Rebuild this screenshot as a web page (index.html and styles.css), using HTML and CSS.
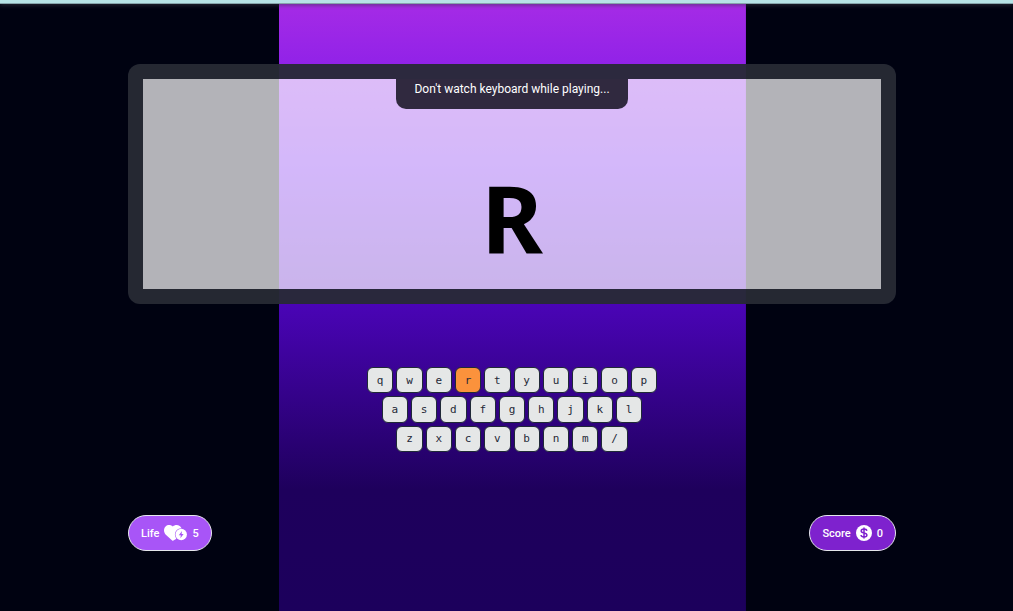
FILE: index.html
```html
<!DOCTYPE html>
<html lang="en">
<head>
<meta charset="utf-8">
<meta name="viewport" content="width=device-width, initial-scale=1">
<title>Typing game</title>
<link rel="stylesheet" href="styles.css">
</head>
<body>
<div class="topbar"></div>
<div class="stage">
<main class="game">
  <section class="screen">
    <p class="notice">Don't watch keyboard while playing...</p>
    <h1 class="letter">R</h1>
  </section>
  <section class="keyboard" aria-label="Keyboard">
    <div class="row"><kbd class="key">q</kbd><kbd class="key">w</kbd><kbd class="key">e</kbd><kbd class="key active">r</kbd><kbd class="key">t</kbd><kbd class="key">y</kbd><kbd class="key">u</kbd><kbd class="key">i</kbd><kbd class="key">o</kbd><kbd class="key">p</kbd></div>
    <div class="row"><kbd class="key">a</kbd><kbd class="key">s</kbd><kbd class="key">d</kbd><kbd class="key">f</kbd><kbd class="key">g</kbd><kbd class="key">h</kbd><kbd class="key">j</kbd><kbd class="key">k</kbd><kbd class="key">l</kbd></div>
    <div class="row"><kbd class="key">z</kbd><kbd class="key">x</kbd><kbd class="key">c</kbd><kbd class="key">v</kbd><kbd class="key">b</kbd><kbd class="key">n</kbd><kbd class="key">m</kbd><kbd class="key">/</kbd></div>
  </section>
  <footer class="stats">
    <div class="pill life">
      <span>Life</span>
      <svg class="heart" viewBox="0 0 23 18" aria-hidden="true"><path fill="#fff" d="M8.8 2.6C10.6 .8 13.6 .6 15.6 2C17.4 3.3 18 5.2 17.6 7L12 15L9.4 16.6Q8.8 17 8.2 16.6L1.8 10.8C-.5 8.4-.6 4.6 1.6 2.4C3.7 .5 7 .7 8.8 2.6Z"/><circle cx="17.2" cy="10.5" r="6.3" fill="#a855f7"/><circle cx="17.2" cy="10.5" r="5.7" fill="#fff"/><path fill="#a855f7" d="M18 7L14.8 11.2H16.8L16.4 14.2L19.6 10H17.6Z"/></svg>
      <span>5</span>
    </div>
    <div class="pill score">
      <span>Score</span>
      <svg class="coin" viewBox="0 0 16 16" aria-hidden="true"><circle cx="8" cy="8" r="8" fill="#fff"/><path d="M8 2.6V13.4M10.8 5.8C10.6 4.6 9.5 4 8 4C6.3 4 5.2 4.7 5.2 5.9C5.2 8.7 10.9 7.1 10.9 10C10.9 11.3 9.7 12 8 12C6.3 12 5.2 11.2 5 10" fill="none" stroke="#7e22ce" stroke-width="1.5"/></svg>
      <span>0</span>
    </div>
  </footer>
</main>
</div>
</body>
</html>
```
FILE: styles.css
```css
* { box-sizing: border-box; }

body {
  margin: 0;
  min-height: 100vh;
  display: flex;
  flex-direction: column;
  font-family: Roboto, "Noto Sans", sans-serif;
  color: #fff;
  background: #000211;
}

.topbar {
  position: relative;
  height: 4px;
  background: #b7e3e6;
  border-bottom: 1px solid #86a4ab;
  box-shadow: 0 1px 4px rgba(60, 60, 70, .7);
}

.stage {
  flex: 1;
  display: flex;
  padding-left: 11px;
  background-image: linear-gradient(180deg, #a52be6 0, #8c20e8 76px, #6c10ee 166px, #4a04b6 300px, #1e005c 486px, #1c005c 100%);
  background-origin: content-box;
  background-size: 46.6% 100%;
  background-position: center top;
  background-repeat: no-repeat;
}

.game {
  width: 100%;
  max-width: 768px;
  margin: 0 auto;
  padding: 60px 0;
  display: flex;
  flex-direction: column;
  align-items: center;
}

.screen {
  width: 100%;
  height: 240px;
  display: flex;
  flex-direction: column;
  align-items: center;
  border: 15px solid rgba(39, 42, 53, .95);
  border-radius: 12px;
  background: rgba(255, 255, 255, .7);
  background-clip: padding-box;
}

.notice {
  margin: 0;
  padding: 0 18px 10px;
  font-size: 12px;
  line-height: 20px;
  background: #30293f;
  border-radius: 0 0 10px 10px;
}

.letter {
  margin: 61px 0 0;
  font-family: "Noto Sans", sans-serif;
  font-size: 94px;
  line-height: 96px;
  font-weight: 700;
  color: #000;
}

.keyboard {
  width: 290px;
  height: 85px;
  margin-top: 63px;
  display: grid;
  grid-template-rows: repeat(3, 1fr);
  gap: 3px;
}

.row {
  display: flex;
  justify-content: center;
  gap: 3px;
}

.key {
  flex: 0 0 calc((100% - 27px) / 10);
  display: flex;
  align-items: center;
  justify-content: center;
  font: 11px "DejaVu Sans Mono", monospace;
  color: #1f2937;
  background: #e5e7e7;
  border: 1px solid #1f2937;
  border-radius: 6px;
}

.key.active { background: #fb923c; }

.stats {
  width: 100%;
  margin-top: auto;
  display: flex;
  justify-content: space-between;
}

.pill {
  height: 36px;
  padding: 0 12px;
  display: flex;
  align-items: center;
  gap: 5px;
  border: 1px solid #e5e7eb;
  border-radius: 18px;
  font-size: 11px;
  font-weight: 500;
}

.life { background: #a855f7; }
.score { background: #7e22ce; }

.heart { width: 23px; height: 18px; }
.coin { width: 16px; height: 16px; }
```
